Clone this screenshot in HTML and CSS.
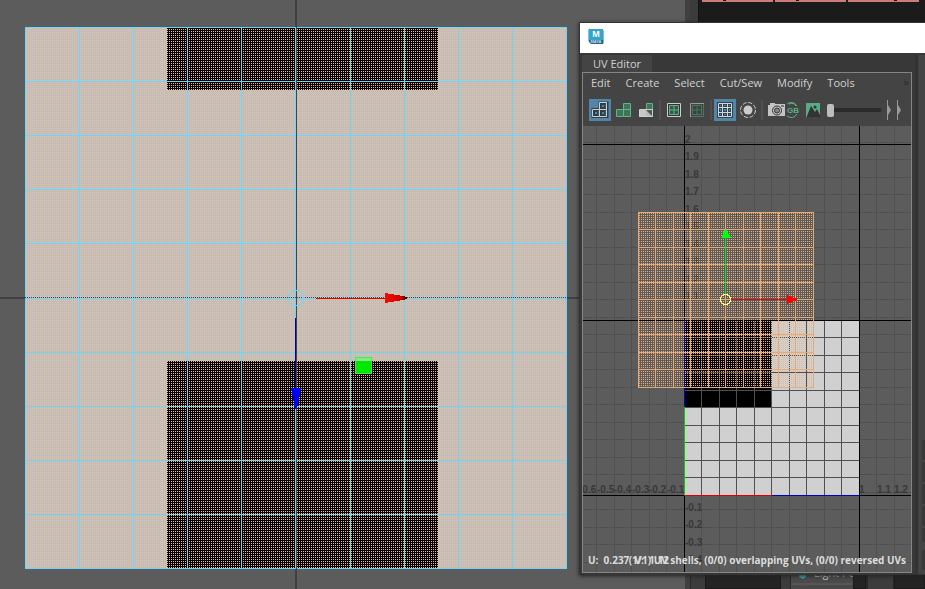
FILE: index.html
```html
<!DOCTYPE html>
<html lang="en">
<head>
<meta charset="utf-8">
<title>UV Editor</title>
<link rel="stylesheet" href="styles.css">
</head>
<body>
<main class="desktop">
  <section class="scene" aria-label="Scene view">
    <svg class="canvas" shape-rendering="crispEdges">
      <defs>
        <pattern id="dots" x="1" y="1" width="2" height="2" patternUnits="userSpaceOnUse"><rect width="1" height="1" fill="#f6b57a"/></pattern>
        <pattern id="dotsSoft" x="1" y="1" width="2" height="2" patternUnits="userSpaceOnUse"><rect width="1" height="1" fill="#e0b08a"/></pattern>
        <linearGradient id="red"><stop offset="0" stop-color="#f01000"/><stop offset=".7" stop-color="#d00000"/><stop offset="1" stop-color="#300"/></linearGradient>
      </defs>
      <path d="M295 0h2v589h-2zM0 297h580v2H0z" fill="#404040"/>
      <rect x="25" y="27" width="542" height="542" fill="#c3c3c3"/>
      <rect x="25" y="27" width="542" height="542" fill="url(#dotsSoft)"/>
      <path d="M167 28h271v62H167zM167 361h271v208H167z" fill="#000"/>
      <path d="M167 28h271v62H167zM167 361h271v208H167z" fill="url(#dots)"/>
      <path d="M25.500 27v542M79.500 27v542M133.500 27v542M187.500 27v542M241.500 27v542M295.500 27v542M350.500 27v542M404.500 27v542M458.500 27v542M512.500 27v542M566.500 27v542M25 27.500h542M25 81.500h542M25 135.500h542M25 189.500h542M25 243.500h542M25 298.500h542M25 352.500h542M25 406.500h542M25 460.500h542M25 514.500h542M25 568.500h542" stroke="#68d7fb" fill="none"/>
      <path d="M296.500 27v542" stroke="#444"/>
      <path d="M25 297.500h542" stroke="#444" stroke-dasharray="1"/>
      <path d="M316 298.500h70" stroke="#e90000"/>
      <path d="M385 293l12 2 10 2v2l-10 2-12 2z" fill="url(#red)"/>
      <path d="M295.500 318v70" stroke="#0000a8"/>
      <path d="M291 388h10l-3 16-1 5h-2l-1-5z" fill="#0000fa"/>
      <circle cx="296" cy="298" r="8" fill="none" stroke="#68d7fb"/>
      <rect x="355" y="357" width="17" height="17" fill="#00e800"/>
      <rect x="355" y="357" width="17" height="4" fill="#8be68b"/>
      <rect x="355.500" y="357.500" width="16" height="16" fill="none" stroke="#3cf03c"/>
    </svg>
  </section>

  <aside class="side">
    <div class="swatches"><i></i><i></i><i></i></div>
    <div class="shelf">
      <span class="gap"></span><span class="well"></span><span class="rule"></span>
      <span class="item"><svg width="10" height="24"><path d="M1 9h7v3l-3 2-4-2z" fill="#3fa9b8"/><path d="M3 20h6" stroke="#754a42"/></svg>Light Po</span>
      <span class="well small"></span><span class="rule wide"></span><span class="well rest"></span>
    </div>
  </aside>

  <section class="window" aria-label="UV Editor window">
    <header class="titlebar">
      <svg width="16" height="17" viewBox="0 0 16 17"><path d="M0 2l2-2v14l-2-1z" fill="#75cce0"/><path d="M1 1h14v12H1z" fill="#33a5cf"/><path d="M1 12h14v4H3l-2-2z" fill="#276681"/><path d="M15 2l1 1v12l-1 1z" fill="#8bb3c2"/><text x="8" y="9" text-anchor="middle" class="logo">M</text><text x="8" y="15" text-anchor="middle" class="logo-sub">MAYA</text></svg>
    </header>
    <div class="body">
      <div class="main">
        <div class="tabs"><button class="tab">UV Editor</button></div>
        <div class="panel">
          <nav class="menu"><button>Edit</button><button>Create</button><button>Select</button><button>Cut/Sew</button><button>Modify</button><button>Tools</button><span class="more">»</span></nav>
          <div class="tools">
            <button class="tool on" aria-label="Shaded shells"><svg viewBox="0 0 22 22"><path d="M4 10.500h7v7H4zM11 10.500h7v7h-7zM11 4h7v6.500h-7z" fill="#4d7f9f" stroke="#2d3d47" stroke-width="3"/><path d="M3.500 10.500h7v7h-7zM10.500 10.500h7v7h-7zM10.500 3.500h7v7h-7z" fill="none" stroke="#d0d0d0"/><path d="M5.500 12.500h3v3h-3zM12.500 12.500h3v3h-3zM12.500 5.500h3v3h-3z" fill="#5285a6" stroke="#2d3d47"/></svg></button>
            <button class="tool" aria-label="Shells"><svg viewBox="0 0 22 22"><path d="M4.500 10.500h7v7h-7zM11.500 10.500h7v7h-7zM11.500 4.500h7v6h-7z" fill="#3e745a" stroke="#62b28c"/></svg></button>
            <button class="tool" aria-label="Distortion"><svg viewBox="0 0 22 22"><path d="M4 11h7v7H4z" fill="#c8c8c8"/><path d="M11.500 4.500h6v6h-6z" fill="#3e745a" stroke="#62b28c"/><path d="M11 11h7v7h-7z" fill="#bbb"/><path d="M11 11l7 7V11z" fill="#4c5c53"/><path d="M4.500 17.500v-7h13v7z" fill="none" stroke="#c8d5ce"/></svg></button>
            <span class="sep"></span>
            <button class="tool" aria-label="Texture borders"><svg viewBox="0 0 22 22"><path d="M4.500 4.500h13v13h-13z" fill="#333" stroke="#ccc"/><path d="M6.500 6.500h9v9h-9zM11 7v8M7 11h8" fill="#315c46" stroke="#62b28c"/></svg></button>
            <button class="tool" aria-label="Edge colors"><svg viewBox="0 0 22 22"><path d="M17.500 4.500v13h-13" fill="none" stroke="#477760"/><path d="M4.500 18V4.500H18" fill="none" stroke="#999"/><path d="M6.500 6.500h9v9h-9zM11 7v8M7 11h8" fill="#37443d" stroke="#477760"/></svg></button>
            <span class="sep"></span>
            <button class="tool on" aria-label="Grid"><svg viewBox="0 0 22 22"><path d="M4.500 4.500h13v13h-13zM8.500 4v14M13.500 4v14M4 8.500h14M4 13.500h14" fill="none" stroke="#2b4353" stroke-width="3"/><path d="M4.500 4.500h13v13h-13zM8.500 4v14M13.500 4v14M4 8.500h14M4 13.500h14" fill="none" stroke="#d5d5d5"/></svg></button>
            <button class="tool" aria-label="Isolate"><svg viewBox="0 0 22 22"><circle cx="11" cy="11" r="4.500" fill="#ccc"/><circle cx="11" cy="11" r="7.500" fill="none" stroke="#ccc" stroke-dasharray="4.200 1.700"/></svg></button>
            <span class="sep"></span>
            <button class="tool slim" aria-label="Snapshot"><svg viewBox="0 0 17 22"><path d="M0 6h2V4h5v1h10v12H0z" fill="#c4c4c4"/><circle cx="9" cy="11.500" r="4.500" fill="#c4c4c4" stroke="#333"/><circle cx="9" cy="11.500" r="2.500" fill="#888" stroke="#333"/><path d="M13 7h3" stroke="#333"/></svg></button>
            <button class="tool slim" aria-label="RGB channels"><svg viewBox="0 0 17 22"><path d="M2 5q6-4 10 2M2 17q6 4 10-2M4 5q5-2 7 2" fill="none" stroke="#5baf87"/><text x="8" y="14" text-anchor="middle" class="gb">GB</text></svg></button>
            <button class="tool" aria-label="Image"><svg viewBox="0 0 22 22"><path d="M4 4h14v14H4z" fill="#58ab84"/><path d="M5 17l4-10 4 6 2-3 3 6v2H5z" fill="#333"/><circle cx="13" cy="8" r="1.500" fill="#333"/></svg></button>
            <input class="dim" type="range" min="0" max="100" value="0" aria-label="Image dimming">
            <button class="tool step" aria-label="Exposure"><svg viewBox="0 0 10 22"><path d="M2.500 1v20" stroke="#999"/><path d="M3 6l3 5-3 5z" fill="#999"/></svg></button>
            <button class="tool step" aria-label="Gamma"><svg viewBox="0 0 10 22"><path d="M2.500 1v20" stroke="#999"/><path d="M3 6l3 5-3 5z" fill="#999"/></svg></button>
          </div>
          <div class="uv">
            <svg class="canvas" shape-rendering="crispEdges">
              <defs>
                <pattern id="cells" x="101" y="-107" width="35" height="35" patternUnits="userSpaceOnUse"><path d="M.500 0v35M17.500 0v35M0 .500h35M0 18.500h35" stroke="#505050"/></pattern>
                <pattern id="uvDots" x="1" y="1" width="2" height="2" patternUnits="userSpaceOnUse"><rect width="1" height="1" fill="#e9ae7b"/></pattern>
                <pattern id="uvDotsLight" x="1" y="1" width="2" height="2" patternUnits="userSpaceOnUse"><rect width="1" height="1" fill="#e4b894"/></pattern>
              </defs>
              <rect width="100%" height="100%" fill="url(#cells)"/>
              <g transform="translate(-583 -126)">
                <rect x="684" y="320" width="175" height="175" fill="#d0d0d0"/>
                <rect x="684" y="320" width="87" height="87" fill="#000"/>
                <path d="M701.500 320v175M719.500 320v175M736.500 320v175M754.500 320v175M771.500 320v175M789.500 320v175M806.500 320v175M824.500 320v175M841.500 320v175M684 337.500h175M684 355.500h175M684 372.500h175M684 390.500h175M684 407.500h175M684 425.500h175M684 442.500h175M684 460.500h175M684 477.500h175" stroke="#505050"/>
                <path d="M684.500 126v446M859.500 126v446M583 144.500h329M583 320.500h329M583 495.500h329" stroke="#000"/>
                <path d="M684.500 320v87M771 495.500h88" stroke="#0000c0"/>
                <path d="M684.500 407v88" stroke="#00d000"/>
                <path d="M684 495.500h88" stroke="#e00000"/>
                <g class="axis">
                  <text x="685" y="143">2</text><text x="685" y="160">1.9</text><text x="685" y="178">1.8</text><text x="685" y="195">1.7</text><text x="685" y="213">1.6</text><text x="685" y="230">1.5</text><text x="685" y="248">1.4</text><text x="685" y="265">1.3</text><text x="685" y="283">1.2</text><text x="685" y="300">1.1</text>
                  <text x="685" y="511">-0.1</text><text x="685" y="528">-0.2</text><text x="685" y="546">-0.3</text><text x="685" y="563">-0.4</text>
                  <text x="579" y="493">-0.6</text><text x="597" y="493">-0.5</text><text x="614" y="493">-0.4</text><text x="632" y="493">-0.3</text><text x="649" y="493">-0.2</text><text x="667" y="493">-0.1</text><text x="859" y="493">1</text><text x="877" y="493">1.1</text><text x="894" y="493">1.2</text>
                </g>
                <path d="M638 212h176v176h-43v-68h-87v68h-46z" fill="url(#uvDots)"/>
                <rect x="684" y="320" width="87" height="68" fill="url(#uvDots)"/>
                <rect x="771" y="320" width="43" height="68" fill="url(#uvDotsLight)"/>
                <path d="M638.500 212v176M655.500 212v176M673.500 212v176M690.500 212v176M708.500 212v176M725.500 212v176M743.500 212v176M760.500 212v176M778.500 212v176M795.500 212v176M813.500 212v176M638 212.500h176M638 229.500h176M638 247.500h176M638 264.500h176M638 282.500h176M638 299.500h176M638 317.500h176M638 334.500h176M638 352.500h176M638 369.500h176M638 387.500h176" stroke="#e6aa77"/>
                <path d="M725.500 238v56" stroke="#00f020"/>
                <path d="M725 229h1l5 9h-10z" fill="#00ff10"/>
                <path d="M731 299.500h56" stroke="#f00000"/>
                <path d="M787 295l10 4v1l-10 4z" fill="#ff0000"/>
                <circle cx="725.500" cy="299.500" r="5" fill="none" stroke="#ffff80"/>
                <g class="status"><text x="588" y="564" xml:space="preserve">U:  0.237  V:  1.12</text><text x="906" y="564" text-anchor="end">(1/1) UV shells, (0/0) overlapping UVs, (0/0) reversed UVs</text></g>
              </g>
            </svg>
          </div>
        </div>
      </div>
      <div class="dock"><div class="dock-tools"><i></i><i></i><i></i><i></i><i class="short"></i><i class="last"></i></div></div>
    </div>
  </section>
</main>
</body>
</html>
```
FILE: styles.css
```css
* { box-sizing: border-box; }
body { margin: 0; background: #3c3c3c; font: 11px/16px "Open Sans", "Noto Sans", sans-serif; color: #d0d0d0; }
button { margin: 0; padding: 0; border: 0; background: none; font: inherit; color: inherit; }
.desktop { position: relative; display: grid; grid-template-columns: 685px 1fr; height: 100vh; overflow: hidden; }
.scene { background: #5c5c5c; min-width: 0; }
.canvas { display: block; width: 100%; height: 100%; }

.side { display: flex; flex-direction: column; justify-content: space-between; min-width: 0; background: #3c3c3c; border-left: 5px solid #404040; overflow: hidden; }
.swatches { display: flex; gap: 2px; height: 40px; margin-left: 8px; padding-left: 3px; background: #1b1b1b; border-left: 1px solid #111; }
.swatches i { flex: 0 0 71px; height: 2px; background: linear-gradient(#111, #111) 21px 0 / 3px 1px no-repeat #cd7b7b; }
.swatches i:last-child { background-position: 46px 0; }
.shelf { display: flex; height: 24px; }
.gap { flex: 0 0 15px; border-left: 1px solid #2a2a2a; }
.well { flex: 0 0 76px; background: #242424; border: 1px solid #1b1b1b; }
.rule { flex: 0 0 10px; border-right: 1px solid #2a2a2a; }
.item { flex: 0 0 62px; display: flex; gap: 6px; padding-left: 7px; overflow: hidden; background: linear-gradient(#4b4b4b 18px, #555 18px 20px, #484848 20px); white-space: nowrap; }
.item svg { flex: none; }
.well.small { flex-basis: 13px; }
.rule.wide { flex-basis: 28px; border-left: 2px solid #2a2a2a; }
.well.rest { flex: 1; }

.window { position: absolute; left: 580px; right: 0; top: 23px; bottom: 15px; display: flex; flex-direction: column; background: #444; box-shadow: 0 0 0 1px #333, 0 1px 4px 1px #222; }
.titlebar { flex: 0 0 30px; padding: 5px 8px; background: #fff; }
.titlebar svg { display: block; }
.logo { font: bold 9px "Liberation Sans", sans-serif; fill: #fff; }
.logo-sub { font: bold 4px "Liberation Sans", sans-serif; fill: #cde; }
.body { flex: 1; display: flex; min-height: 0; background: #383838; }
.main { flex: 1; display: flex; flex-direction: column; min-width: 0; }
.tabs { flex: 0 0 19px; padding: 2px 2px 0; }
.tab { display: block; width: 70px; height: 17px; background: #444; border-radius: 2px 2px 0 0; line-height: 17px; }
.panel { flex: 1; display: flex; flex-direction: column; min-height: 0; margin: 0 3px 1px 2px; border: 1px solid #858585; background: #444; }
.menu { flex: 0 0 20px; display: flex; gap: 15px; padding: 0 2px 0 8px; line-height: 18px; }
.more { margin-left: auto; color: #2b2b2b; }
.tools { flex: 0 0 33px; display: flex; align-items: center; padding: 1px 0 0 6px; }
.tool { flex: 0 0 22px; height: 22px; margin-right: 1px; }
.tool svg { display: block; width: 100%; height: 22px; }
.tool.on { background: #5285a6; }
.tool.slim { flex-basis: 17px; margin: 0; }
.tool.step { flex-basis: 10px; margin: 0; }
.gb { font: bold 8px "Liberation Sans", sans-serif; fill: #5baf87; }
.sep { flex: 0 0 2px; height: 20px; margin: 0 2px 0 1px; background: #505050; }
.sep + .slim { margin-left: 3px; }
.dim { flex: 0 0 54px; width: 54px; min-width: 0; height: 22px; margin: 0 4px 0 2px; appearance: none; background: linear-gradient(#2b2b2b, #2b2b2b) center / 100% 4px no-repeat; }
.dim::-webkit-slider-thumb { appearance: none; width: 7px; height: 13px; border-radius: 2px; background: #bdbdbd; }
.uv { flex: 1; min-height: 0; background: #5c5c5c; overflow: hidden; }
.axis { font: bold 10px "Liberation Sans", sans-serif; fill: #383838; }
.status { font: bold 10px "Open Sans", sans-serif; fill: #ddd; }
.dock { flex: 0 0 10px; display: flex; flex-direction: column; justify-content: flex-end; margin-top: 2px; border-left: 3px solid #333; background: #444; }
.dock-tools { display: flex; flex-direction: column; gap: 2px; padding: 0 0 4px 4px; }
.dock-tools i { height: 20px; background: #383838; border-radius: 2px 0 0 2px; }
.dock-tools .short { height: 14px; }
.dock-tools .last { margin-top: 6px; }
```
